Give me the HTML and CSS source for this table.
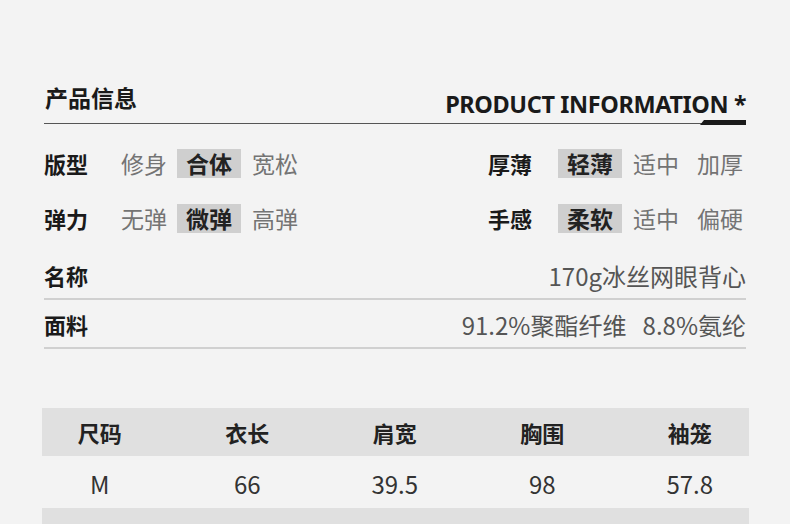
FILE: index.html
```html
<!DOCTYPE html>
<html lang="zh">
<head>
<meta charset="utf-8">
<link rel="stylesheet" href="styles.css">
</head>
<body>
<div class="page">
  <div class="head">
    <h1 class="title-cn">产品信息</h1>
    <div class="title-en">PRODUCT INFORMATION <span class="star">*</span></div>
    <span class="head-accent"></span>
  </div>

  <div class="attrs">
    <div class="attr">
      <span class="label">版型</span>
      <span class="opt">修身</span>
      <span class="opt sel">合体</span>
      <span class="opt">宽松</span>
    </div>
    <div class="attr right">
      <span class="label">厚薄</span>
      <span class="opt sel">轻薄</span>
      <span class="opt">适中</span>
      <span class="opt far">加厚</span>
    </div>
    <div class="attr">
      <span class="label">弹力</span>
      <span class="opt">无弹</span>
      <span class="opt sel">微弹</span>
      <span class="opt">高弹</span>
    </div>
    <div class="attr right">
      <span class="label">手感</span>
      <span class="opt sel">柔软</span>
      <span class="opt">适中</span>
      <span class="opt far">偏硬</span>
    </div>
  </div>

  <div class="info">
    <div class="info-row">
      <span class="label">名称</span>
      <span class="value">170g冰丝网眼背心</span>
    </div>
    <div class="info-row">
      <span class="label">面料</span>
      <span class="value">91.2%聚酯纤维&nbsp;&nbsp;&nbsp;8.8%氨纶</span>
    </div>
  </div>

  <div class="size-table">
    <div class="trow thead">
      <span>尺码</span><span>衣长</span><span>肩宽</span><span>胸围</span><span>袖笼</span>
    </div>
    <div class="trow body">
      <span>M</span><span>66</span><span>39.5</span><span>98</span><span>57.8</span>
    </div>
    <div class="trow shade">
      <span></span><span></span><span></span><span></span><span></span>
    </div>
  </div>
</div>
</body>
</html>
```

FILE: styles.css
```css
* { box-sizing: border-box; margin: 0; padding: 0; }

html, body {
  background: #f3f3f3;
}

body {
  font-family: "Noto Sans CJK SC", "Noto Sans", sans-serif;
  color: #222;
  overflow: hidden;
}

.page {
  width: 790px;
  padding: 80px 44px 0 44px;
}

.head {
  position: relative;
  height: 44px;
  display: flex;
  justify-content: space-between;
  align-items: flex-end;
  border-bottom: 1.5px solid #555;
}

.title-cn {
  font-size: 23px;
  font-weight: 700;
  line-height: 1;
  margin-bottom: 14px;
  margin-left: 1px;
  color: #1a1a1a;
}

.title-en {
  font-family: "Noto Sans", sans-serif;
  font-size: 23.5px;
  font-weight: 700;
  line-height: 1;
  margin-bottom: 7px;
  color: #1a1a1a;
  letter-spacing: -0.4px;
  white-space: nowrap;
}

.star {
  font-size: 23px;
}

.head-accent {
  position: absolute;
  right: 0;
  bottom: -2px;
  width: 46px;
  height: 5px;
  background: #1a1a1a;
  clip-path: polygon(4px 0, 100% 0, 100% 100%, 0 100%);
}

.attrs {
  display: grid;
  grid-template-columns: 444px 1fr;
  row-gap: 26px;
  margin-top: 25px;
}

.attr {
  display: flex;
  align-items: center;
  height: 29px;
  font-size: 23px;
  line-height: 29px;
}

.attr .label {
  width: 77px;
  font-size: 22px;
  font-weight: 700;
  color: #1a1a1a;
}

.attr.right .label {
  width: 70px;
}

.opt {
  color: #747474;
  margin-right: 10px;
}

.opt.sel {
  background: #cfcfcf;
  color: #222;
  font-weight: 700;
  padding: 0 9px;
  margin-right: 11px;
}

.opt.far {
  margin-left: 8px;
  margin-right: 0;
}

.info {
  margin-top: 18px;
}

.info-row {
  display: flex;
  justify-content: space-between;
  align-items: center;
  height: 49px;
  padding-top: 1px;
  border-bottom: 2px solid #d0d0d0;
}

.info-row .label {
  font-size: 22px;
  font-weight: 700;
  color: #1a1a1a;
}

.info-row .value {
  font-size: 24px;
  color: #555;
}

.size-table {
  margin-top: 59px;
  margin-left: -2px;
  width: 707px;
}

.trow {
  display: grid;
  grid-template-columns: repeat(5, 147.5px);
  height: 52px;
  align-items: center;
  font-size: 24px;
  color: #333;
  overflow: hidden;
  text-align: center;
}

.trow > span {
  position: relative;
  left: -16px;
}

.trow.body {
  padding-top: 3px;
}

.thead {
  background: #e0e0e0;
  height: 48px;
  font-size: 22px;
  font-weight: 700;
  color: #222;
}

.shade {
  background: #e0e0e0;
  height: 40px;
}
```
